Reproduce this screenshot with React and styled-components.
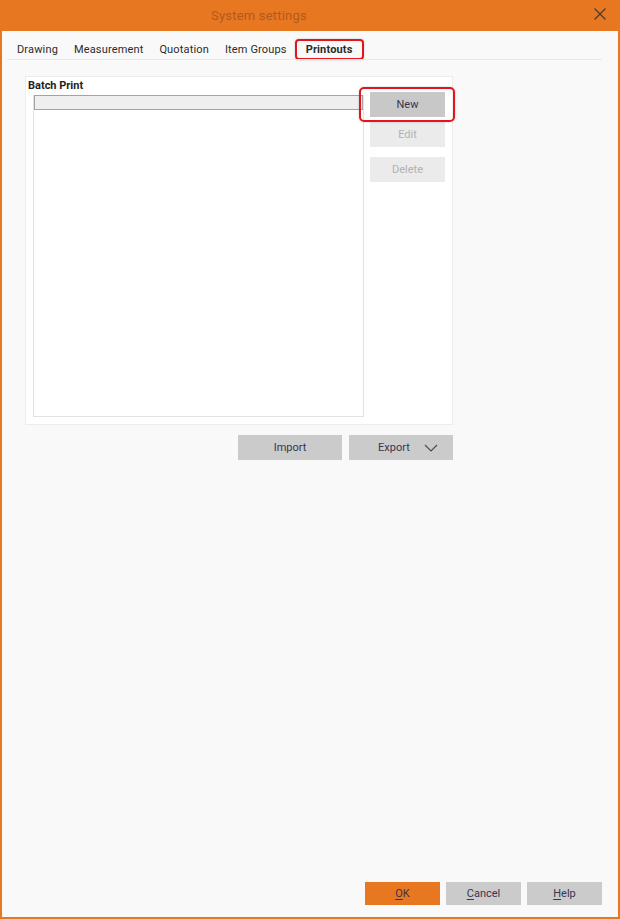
import styled, { createGlobalStyle } from 'styled-components';

const GlobalStyle = createGlobalStyle`
  html, body {
    margin: 0;
    padding: 0;
    background: #f9f9f9;
  }
  body {
    font-family: Roboto, 'Noto Sans', sans-serif;
  }
`;

const tabs = ['Drawing', 'Measurement', 'Quotation', 'Item Groups', 'Printouts'];

const Mnemonic = ({ text }) => (
  <span>
    <u>{text[0]}</u>
    {text.slice(1)}
  </span>
);

const App = () => {
  return (
    <>
      <GlobalStyle />
      <Window>
        <TitleBar>
          <Title>System settings</Title>
          <Close>
            <svg width="12" height="12" viewBox="0 0 12 12">
              <path d="M0.5 0.5 L11.5 11.5 M11.5 0.5 L0.5 11.5" stroke="#3b3b3b" strokeWidth="1.1" />
            </svg>
          </Close>
        </TitleBar>
        <Body>
          <TabBar>
            {tabs.map((t) => (
              <Tab key={t} $active={t === 'Printouts'}>
                {t}
              </Tab>
            ))}
          </TabBar>
          <Separator />
          <Group>
            <GroupTitle>Batch Print</GroupTitle>
            <GroupContent>
              <List>
                <ListHeader />
              </List>
              <SideButtons>
                <Highlighted>
                  <Button $primary>New</Button>
                </Highlighted>
                <Button disabled>Edit</Button>
                <Button disabled $spaced>Delete</Button>
              </SideButtons>
            </GroupContent>
          </Group>
          <ActionRow>
            <WideButton>Import</WideButton>
            <WideButton $menu>
              Export
              <Chevron>
                <svg width="14" height="8" viewBox="0 0 14 8">
                  <path d="M1 1 L7 7 L13 1" fill="none" stroke="#4a4a4a" strokeWidth="1.1" />
                </svg>
              </Chevron>
            </WideButton>
          </ActionRow>
          <Spacer />
          <Footer>
            <FooterButton $ok>
              <Mnemonic text="OK" />
            </FooterButton>
            <FooterButton>
              <Mnemonic text="Cancel" />
            </FooterButton>
            <FooterButton>
              <Mnemonic text="Help" />
            </FooterButton>
          </Footer>
        </Body>
      </Window>
    </>
  );
};

export default App;

const Window = styled.div`
  width: 620px;
  height: 919px;
  box-sizing: border-box;
  display: flex;
  flex-direction: column;
  border: 2px solid #e87722;
  border-top: none;
  background: #f9f9f9;
`;

const TitleBar = styled.div`
  height: 31px;
  background: #e87722;
  display: flex;
  align-items: center;
  position: relative;
  margin: 0 -2px;
`;

const Title = styled.div`
  flex: 1;
  text-align: center;
  padding-right: 102px;
  color: #b25a1c;
  font-size: 13px;
  letter-spacing: 0.2px;
`;

const Close = styled.div`
  position: absolute;
  right: 14px;
  top: 8px;
  display: flex;
`;

const Body = styled.div`
  flex: 1;
  display: flex;
  flex-direction: column;
  padding: 0 0 12px 0;
`;

const TabBar = styled.div`
  display: flex;
  align-items: center;
  padding: 8px 0 0 15px;
  height: 21px;
`;

const Tab = styled.div`
  font-size: 11px;
  letter-spacing: 0.15px;
  color: #2b2b2b;
  padding: 2px 8px;
  font-weight: ${(p) => (p.$active ? 700 : 400)};
  border-radius: 4px;
  &:first-child {
    padding-left: 0;
  }
  ${(p) =>
    p.$active &&
    `
    border: 2px solid #e4141b;
    padding: 2px 9px;
    box-shadow: 0 0 2px rgba(0,0,0,0.25);
  `}
`;

const Separator = styled.div`
  height: 1px;
  background: #e8e8e8;
  margin: -1px 16px 0 5px;
`;

const Group = styled.div`
  margin: 16px 0 0 23px;
  width: 428px;
  height: 349px;
  box-sizing: border-box;
  background: #fff;
  border: 1px solid #ececec;
  display: flex;
  flex-direction: column;
  padding: 2px 7px 7px 2px;
`;

const GroupTitle = styled.div`
  font-size: 11px;
  font-weight: 700;
  color: #222;
  line-height: 13px;
  margin-bottom: 3px;
`;

const GroupContent = styled.div`
  flex: 1;
  display: flex;
  gap: 6px;
  padding-left: 5px;
`;

const List = styled.div`
  width: 331px;
  box-sizing: border-box;
  border: 1px solid #e2e2e2;
  border-top: none;
  background: #fff;
`;

const ListHeader = styled.div`
  height: 15px;
  box-sizing: border-box;
  background: #efefef;
  border: 1px solid #a3a3a3;
`;

const SideButtons = styled.div`
  display: flex;
  flex-direction: column;
  gap: 5px;
  margin-top: -3px;
`;

const Highlighted = styled.div`
  position: relative;
  &::after {
    content: '';
    position: absolute;
    left: -11px;
    right: -10px;
    top: -5px;
    bottom: -5px;
    border: 2px solid #e4141b;
    border-radius: 5px;
    box-shadow: 0 0 2px rgba(0, 0, 0, 0.25);
    pointer-events: none;
  }
`;

const Button = styled.button`
  width: 75px;
  height: 25px;
  border: none;
  font-family: inherit;
  font-size: 11px;
  background: ${(p) => (p.$primary ? '#c8c8c8' : '#ebebeb')};
  color: ${(p) => (p.$primary ? '#3b3350' : '#b2b2b2')};
  margin-top: ${(p) => (p.$spaced ? '5px' : '0')};
  padding: 0;
`;

const ActionRow = styled.div`
  display: flex;
  gap: 7px;
  width: 451px;
  justify-content: flex-end;
  margin-top: 10px;
`;

const WideButton = styled.div`
  width: 104px;
  height: 25px;
  background: #cbcbcb;
  color: #3b3350;
  font-size: 11px;
  display: flex;
  align-items: center;
  justify-content: center;
  gap: ${(p) => (p.$menu ? '14px' : '0')};
  padding-left: ${(p) => (p.$menu ? '14px' : '0')};
  box-sizing: border-box;
`;

const Chevron = styled.span`
  display: flex;
  align-items: center;
`;

const Spacer = styled.div`
  flex: 1;
`;

const Footer = styled.div`
  display: flex;
  justify-content: flex-end;
  gap: 6px;
  padding-right: 16px;
`;

const FooterButton = styled.div`
  width: 75px;
  height: 23px;
  display: flex;
  align-items: center;
  justify-content: center;
  font-size: 11px;
  background: ${(p) => (p.$ok ? '#e87722' : '#cbcbcb')};
  color: #3b3350;
  u {
    text-underline-offset: 2px;
  }
`;
